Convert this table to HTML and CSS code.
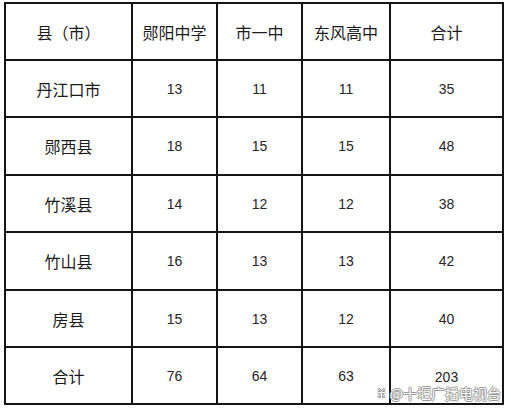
FILE: index.html
```html
<!DOCTYPE html>
<html lang="zh">
<head>
<meta charset="utf-8">
<link rel="stylesheet" href="styles.css">
</head>
<body>
<div class="wrap">
  <div class="grid">
    <div class="cell head">县（市）</div>
    <div class="cell head">郧阳中学</div>
    <div class="cell head">市一中</div>
    <div class="cell head">东风高中</div>
    <div class="cell head">合计</div>

    <div class="cell">丹江口市</div>
    <div class="cell num">13</div>
    <div class="cell num">11</div>
    <div class="cell num">11</div>
    <div class="cell num">35</div>

    <div class="cell">郧西县</div>
    <div class="cell num">18</div>
    <div class="cell num">15</div>
    <div class="cell num">15</div>
    <div class="cell num">48</div>

    <div class="cell">竹溪县</div>
    <div class="cell num">14</div>
    <div class="cell num">12</div>
    <div class="cell num">12</div>
    <div class="cell num">38</div>

    <div class="cell">竹山县</div>
    <div class="cell num">16</div>
    <div class="cell num">13</div>
    <div class="cell num">13</div>
    <div class="cell num">42</div>

    <div class="cell">房县</div>
    <div class="cell num">15</div>
    <div class="cell num">13</div>
    <div class="cell num">12</div>
    <div class="cell num">40</div>

    <div class="cell">合计</div>
    <div class="cell num">76</div>
    <div class="cell num">64</div>
    <div class="cell num">63</div>
    <div class="cell num last">203</div>
  </div>
  <div class="watermark">
    <svg class="wm-icon" width="11" height="12" viewBox="0 0 11 12">
      <path d="M2 1.5 L5.5 4.5 L9 1.5 M1.5 5.5 L9.5 5.5 M2 10.5 L5.5 7 L9 10.5 M5.5 4.5 V11" fill="none" stroke="#8e8e8e" stroke-width="2.4"/>
      <path d="M2 1.5 L5.5 4.5 L9 1.5 M1.5 5.5 L9.5 5.5 M2 10.5 L5.5 7 L9 10.5 M5.5 4.5 V11" fill="none" stroke="#fff" stroke-width="1"/>
    </svg>
    <span class="wm-text">@十堰广播电视台</span>
  </div>
</div>
</body>
</html>
```
FILE: styles.css
```css
html, body {
  background: #fff;
}
body {
  margin: 2px 0 0 4px;
  font-family: "Noto Sans CJK SC", "Noto Sans", sans-serif;
  color: #1a1a1a;
}
.wrap {
  position: relative;
  width: 500px;
}
.grid {
  display: grid;
  grid-template-columns: 127px 85px 85px 88px 113px;
  grid-template-rows: 57px 57px 58px 57px 58px 57px 57px;
  border-left: 2px solid #151515;
  border-top: 2px solid #151515;
  width: 498px;
}
.cell {
  border-right: 2px solid #151515;
  border-bottom: 2px solid #151515;
  display: flex;
  align-items: center;
  justify-content: center;
  font-size: 16px;
  line-height: 1;
}
.num {
  font-family: "Liberation Sans", "Noto Sans CJK SC", sans-serif;
  font-size: 14px;
  color: #262626;
}
.last {
  align-items: flex-start;
  padding-top: 22px;
}
.head {
  font-size: 16px;
}
.watermark {
  position: absolute;
  right: 3px;
  bottom: 5px;
  display: flex;
  align-items: center;
  gap: 3px;
}
.wm-icon {
  display: block;
}
.wm-text {
  font-size: 14px;
  line-height: 1;
  color: #fafafa;
  text-shadow: 1px 0 0 #999, -1px 0 0 #999, 0 1px 0 #999, 0 -1px 0 #999;
}
```
